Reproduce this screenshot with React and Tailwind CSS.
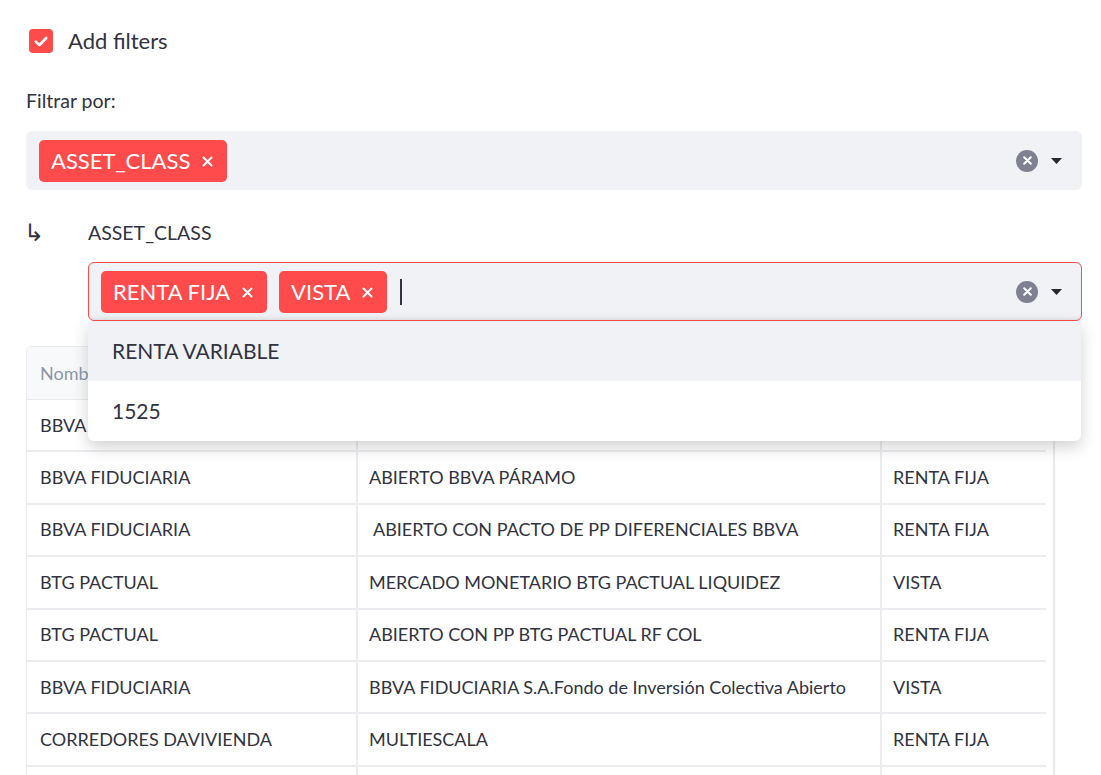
import { useState } from 'react'

const rows = [
  ['BBVA FIDUCIARIA', 'ABIERTO BBVA RENTA FIJA', 'RENTA FIJA'],
  ['BBVA FIDUCIARIA', 'ABIERTO BBVA PÁRAMO', 'RENTA FIJA'],
  ['BBVA FIDUCIARIA', ' ABIERTO CON PACTO DE PP DIFERENCIALES BBVA', 'RENTA FIJA'],
  ['BTG PACTUAL', 'MERCADO MONETARIO BTG PACTUAL LIQUIDEZ', 'VISTA'],
  ['BTG PACTUAL', 'ABIERTO CON PP BTG PACTUAL RF COL', 'RENTA FIJA'],
  ['BBVA FIDUCIARIA', 'BBVA FIDUCIARIA S.A.Fondo de Inversión Colectiva Abierto', 'VISTA'],
  ['CORREDORES DAVIVIENDA', 'MULTIESCALA', 'RENTA FIJA'],
  ['CORREDORES DAVIVIENDA', 'DAVIVIENDA RENTA FIJA', 'RENTA FIJA'],
]

function Tag({ label }) {
  return (
    <span className="flex h-[42px] items-center gap-[12px] rounded-[5px] bg-[#ff4b4b] pl-3 pr-[14px] text-[22px] text-white">
      {label}
      <svg width="11" height="11" viewBox="0 0 11 11" className="mt-[2px]">
        <path d="M1.5 1.5l8 8M9.5 1.5l-8 8" stroke="white" strokeWidth="2" strokeLinecap="round" />
      </svg>
    </span>
  )
}

function Controls() {
  return (
    <div className="flex items-center gap-[13px]">
      <span className="flex h-[22px] w-[22px] items-center justify-center rounded-full bg-[#7f8190]">
        <svg width="9" height="9" viewBox="0 0 9 9">
          <path d="M1.2 1.2l6.6 6.6M7.8 1.2l-6.6 6.6" stroke="white" strokeWidth="2" strokeLinecap="round" />
        </svg>
      </span>
      <svg width="11" height="6" viewBox="0 0 11 6">
        <path d="M0 0h11L5.5 6z" fill="#262730" />
      </svg>
    </div>
  )
}

export default function App() {
  const [checked, setChecked] = useState(true)

  return (
    <div className="h-[775px] overflow-hidden bg-white pl-[26px] pr-[19px] text-[#31333f] [font-family:Lato,'Noto_Sans',sans-serif]">
      <label className="flex cursor-pointer items-center gap-[15px] pl-[3px] pt-[29px]" onClick={() => setChecked(!checked)}>
        <span className="flex h-6 w-6 items-center justify-center rounded-[4px] bg-[#ff4b4b]">
          {checked && (
            <svg width="14" height="11" viewBox="0 0 14 11">
              <path d="M1.8 5.6l3.6 3.4L12.2 2" fill="none" stroke="white" strokeWidth="2.6" strokeLinecap="round" strokeLinejoin="round" />
            </svg>
          )}
        </span>
        <span className="text-[22px] leading-6">Add filters</span>
      </label>

      <div className="mt-[36px] text-[19.5px] leading-6">Filtrar por:</div>

      <div className="mt-[18px] flex h-[59px] items-center justify-between rounded-[6px] bg-[#f0f2f6] pl-[13px] pr-[20px]">
        <Tag label="ASSET_CLASS" />
        <Controls />
      </div>

      <div className="mt-[31px] flex">
        <div className="-ml-[2px] w-[64px] text-[24px] leading-6 font-light text-[#31333f] [font-family:'DejaVu_Sans',sans-serif]">↳</div>
        <div className="relative flex-1">
          <div className="text-[19.5px] leading-6">ASSET_CLASS</div>
          <div className="mt-[17px] flex h-[59px] items-center justify-between rounded-[6px] border border-[#ff4b4b] bg-[#f0f2f6] pl-[12px] pr-[19px] shadow-[inset_0_-4px_4px_-3px_rgba(0,0,0,0.08)]">
            <div className="flex items-center gap-3">
              <Tag label="RENTA FIJA" />
              <Tag label="VISTA" />
              <span className="ml-[1px] h-[26px] w-[2px] bg-[#31333f]" />
            </div>
            <Controls />
          </div>
          <div className="absolute left-0 right-[1px] top-[100%] z-10 overflow-hidden rounded-b-[6px] bg-white text-[21px] shadow-[0_6px_16px_rgba(0,0,0,0.18)]">
            <div className="flex h-[60px] items-center bg-[#f0f2f6] pl-6">RENTA VARIABLE</div>
            <div className="flex h-[60px] items-center pl-6">1525</div>
          </div>
        </div>
      </div>

      <div className="mt-[25px] w-[1029px] overflow-hidden rounded-t-[5px] border border-r-2 border-[#e8e9ec] text-[18px]">
        <div className="flex h-[53px] border-b border-[#e8e9ec] bg-[#f8f9fb] text-[#8a97a8]">
          <div className="flex w-[331px] shrink-0 items-center border-r-2 border-[#ebecef] pl-[13px]">Nombre Entidad</div>
          <div className="flex w-[524px] shrink-0 items-center border-r-2 border-[#ebecef] pl-[11px]">Nombre Fondo</div>
          <div className="flex w-[164px] shrink-0 items-center pl-[11px]">Tipo</div>
        </div>
        {rows.map((r, i) => (
          <div key={i} className="flex h-[52.4px] w-[1019px] border-b-2 border-[#ebecef]">
            <div className="flex w-[331px] shrink-0 items-center border-r-2 border-[#ebecef] pl-[13px]">{r[0]}</div>
            <div className="flex w-[524px] shrink-0 items-center overflow-hidden whitespace-pre border-r-2 border-[#ebecef] pl-[11px]">{r[1]}</div>
            <div className="flex w-[164px] shrink-0 items-center pl-[11px]">{r[2]}</div>
          </div>
        ))}
      </div>
    </div>
  )
}
